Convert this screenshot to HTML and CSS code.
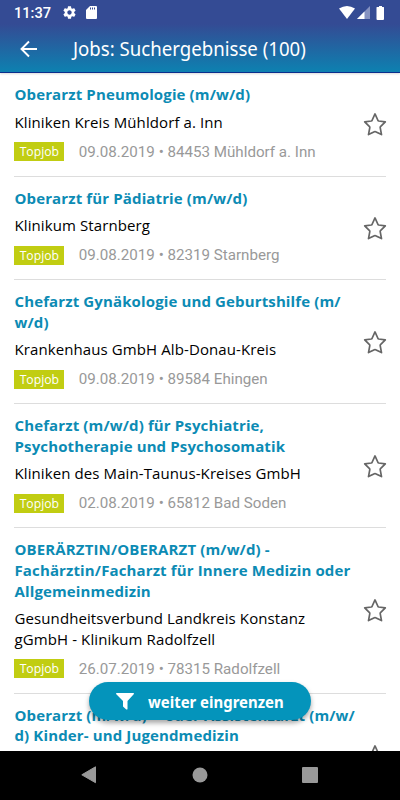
FILE: index.html
```html
<!DOCTYPE html>
<html lang="de">
<head>
    <meta charset="UTF-8">
    <meta name="viewport" content="width=device-width, initial-scale=1.0">
    <title>Jobs: Suchergebnisse</title>
    <link rel="stylesheet" href="styles.css">
</head>
<body>

<!-- Icons -->
<svg class="sprite">
    <symbol id="star" viewBox="0 0 24 24">
        <path d="M12 1.9 L15 8.5 Q15.2 8.9 15.7 9 L22.3 9.9 L17.5 14.7 Q17.1 15.1 17.2 15.6 L18.5 22.6 L12.6 19.7 Q12 19.4 11.4 19.7 L5.5 22.6 L6.8 15.6 Q6.9 15.1 6.5 14.7 L1.7 9.9 L8.3 9 Q8.8 8.9 9 8.5 Z" fill="none" stroke="#666" stroke-width="1.7" stroke-linejoin="round"/>
    </symbol>
</svg>

<div class="screen">
    <!-- Statusleiste und Titel -->
    <header class="header">
        <div class="status">
            <span class="time">11:37</span>
            <svg class="gear" viewBox="0 0 24 24"><path fill="#fff" d="M19.43 12.98c.04-.32.07-.64.07-.98s-.03-.66-.07-.98l2.11-1.65c.19-.15.24-.42.12-.64l-2-3.46c-.12-.22-.39-.3-.61-.22l-2.49 1c-.52-.4-1.08-.73-1.69-.98l-.38-2.65C14.46 2.18 14.25 2 14 2h-4c-.25 0-.46.18-.49.42l-.38 2.65c-.61.25-1.17.59-1.69.98l-2.49-1c-.23-.09-.49 0-.61.22l-2 3.46c-.13.22-.07.49.12.64l2.11 1.65c-.04.32-.07.65-.07.98s.03.66.07.98l-2.11 1.65c-.19.15-.24.42-.12.64l2 3.46c.12.22.39.3.61.22l2.49-1c.52.4 1.08.73 1.69.98l.38 2.65c.03.24.24.42.49.42h4c.25 0 .46-.18.49-.42l.38-2.65c.61-.25 1.17-.59 1.69-.98l2.49 1c.23.09.49 0 .61-.22l2-3.46c.12-.22.07-.49-.12-.64l-2.11-1.65zM12 15.5c-1.93 0-3.5-1.57-3.5-3.5s1.57-3.5 3.5-3.5 3.5 1.57 3.5 3.5-1.57 3.5-3.5 3.5z"/></svg>
            <svg class="sdcard" viewBox="0 0 11 13"><path fill="#fff" d="M4 0h6q1 0 1 1v11q0 1-1 1H1q-1 0-1-1V4z"/><path stroke="#344b94" d="M4.5 1.5v2M6.5 1.5v2M8.5 1.5v2"/></svg>
            <svg class="signals" viewBox="0 0 48 16">
                <path fill="#fff" d="M0 3.6Q8 -1.6 16 3.6L8 14z"/>
                <path fill="#8592c1" d="M31 1v13H18z"/>
                <path fill="#fff" d="M25.5 6.5V14H18z"/>
                <path fill="#fff" d="M40 1h3v1h1.5q.5 0 .5.5v11.5q0 1-1 1h-5.5q-1 0-1-1V2.5q0-.5.5-.5H40z"/>
            </svg>
        </div>
        <div class="toolbar">
            <svg class="back" viewBox="0 0 18 18"><path d="M17 9H2M9 1.5L1.5 9L9 16.5" fill="none" stroke="#fff" stroke-width="1.9"/></svg>
            <h1>Jobs: Suchergebnisse (100)</h1>
        </div>
    </header>

    <!-- Trefferliste -->
    <main class="list">
        <article class="job">
            <div class="info">
                <h2>Oberarzt Pneumologie (m/w/d)</h2>
                <p class="company">Kliniken Kreis Mühldorf a. Inn</p>
                <p class="meta"><span class="badge">Topjob</span><span class="place">09.08.2019 • 84453 Mühldorf a. Inn</span></p>
            </div>
            <svg class="star"><use href="#star"/></svg>
        </article>
        <article class="job">
            <div class="info">
                <h2>Oberarzt für Pädiatrie (m/w/d)</h2>
                <p class="company">Klinikum Starnberg</p>
                <p class="meta"><span class="badge">Topjob</span><span class="place">09.08.2019 • 82319 Starnberg</span></p>
            </div>
            <svg class="star"><use href="#star"/></svg>
        </article>
        <article class="job">
            <div class="info">
                <h2>Chefarzt Gynäkologie und Geburtshilfe (m/<br>w/d)</h2>
                <p class="company">Krankenhaus GmbH Alb-Donau-Kreis</p>
                <p class="meta"><span class="badge">Topjob</span><span class="place">09.08.2019 • 89584 Ehingen</span></p>
            </div>
            <svg class="star"><use href="#star"/></svg>
        </article>
        <article class="job">
            <div class="info">
                <h2>Chefarzt (m/w/d) für Psychiatrie,<br>Psychotherapie und Psychosomatik</h2>
                <p class="company">Kliniken des Main-Taunus-Kreises GmbH</p>
                <p class="meta"><span class="badge">Topjob</span><span class="place">02.08.2019 • 65812 Bad Soden</span></p>
            </div>
            <svg class="star"><use href="#star"/></svg>
        </article>
        <article class="job">
            <div class="info">
                <h2>OBERÄRZTIN/OBERARZT (m/w/d) -<br>Fachärztin/Facharzt für Innere Medizin oder<br>Allgemeinmedizin</h2>
                <p class="company">Gesundheitsverbund Landkreis Konstanz<br>gGmbH - Klinikum Radolfzell</p>
                <p class="meta"><span class="badge">Topjob</span><span class="place">26.07.2019 • 78315 Radolfzell</span></p>
            </div>
            <svg class="star"><use href="#star"/></svg>
        </article>
        <article class="job last">
            <div class="info">
                <h2>Oberarzt (m/w/d) <span class="second">oder Assistenzarzt</span> (m/w/<br>d) Kinder- und Jugendmedizin</h2>
            </div>
            <svg class="star"><use href="#star"/></svg>
        </article>
    </main>

    <!-- Filter -->
    <button class="filter">
        <svg class="funnel" viewBox="0 0 18 17"><path fill="#fff" d="M.5 0h17q.8.5.2 1.3L11.5 8v8q-.3.9-1.2.4L7 13.5V8L.3 1.3Q-.2.5.5 0z"/></svg>
        <span>weiter eingrenzen</span>
    </button>

    <!-- Navigationsleiste -->
    <nav class="navbar">
        <svg viewBox="0 0 16 18"><path fill="#999" d="M14.5.8v15.9L.8 8.8z" stroke="#999" stroke-linejoin="round"/></svg>
        <svg viewBox="0 0 16 18"><circle cx="8" cy="9" r="7.5" fill="#999"/></svg>
        <svg viewBox="0 0 16 18"><rect y="1" width="16" height="16" rx="1" fill="#999"/></svg>
    </nav>
</div>

</body>
</html>
```

FILE: styles.css
```css
* {
    box-sizing: border-box;
}

body {
    margin: 0;
    background: #fff;
    font-family: "Open Sans", "Noto Sans", sans-serif;
}

h1, h2, p {
    margin: 0;
}

svg {
    display: block;
    flex: none;
}

.sprite {
    display: none;
}

.screen {
    position: relative;
    display: flex;
    flex-direction: column;
    width: 400px;
    height: 800px;
    overflow: hidden;
}

/* Kopfbereich */
.header {
    flex: none;
    height: 73px;
    background: linear-gradient(#344b94 24px, #0e80b0 71px);
    border-bottom: 1px solid #0b2e8c;
    box-shadow: 0 1px 2px rgba(0, 0, 0, 0.15);
    color: #fff;
}

.status {
    display: flex;
    align-items: center;
    height: 25px;
    padding: 0 14px;
}

.time {
    width: 48px;
    font: 500 14.6px Roboto, sans-serif;
}

.gear {
    width: 15px;
    height: 15px;
}

.sdcard {
    width: 11px;
    height: 13px;
    margin-left: 9px;
}

.signals {
    width: 48px;
    height: 16px;
    margin-left: auto;
    margin-right: -1px;
}

.toolbar {
    display: flex;
    align-items: center;
    height: 47px;
    padding-left: 20px;
}

.back {
    width: 18px;
    height: 18px;
}

h1 {
    margin-left: 35px;
    font-family: "Noto Sans", sans-serif;
    font-size: 19.5px;
    font-weight: 400;
    white-space: nowrap;
    transform: scaleX(0.955);
    transform-origin: left;
}

/* Liste */
.list {
    flex: 1;
    min-height: 0;
    padding: 0.5px 14px 0;
    overflow: hidden;
}

.job {
    display: flex;
    align-items: center;
    padding: 10.7px 0 14.1px;
    border-bottom: 1px solid #ddd;
}

.info {
    flex: 1;
    padding-left: 0.5px;
    white-space: nowrap;
}

h2 {
    color: #0c8bb4;
    font-size: 15px;
    font-weight: 700;
    line-height: 20.7px;
    letter-spacing: 0.13px;
}

.company {
    margin-top: 7px;
    color: #000;
    font-size: 15px;
    line-height: 20.7px;
    letter-spacing: 0.1px;
}

.meta {
    display: flex;
    align-items: center;
    height: 20px;
    margin-top: 9.2px;
}

.badge {
    width: 50px;
    height: 19px;
    margin-left: -0.2px;
    background: #c1cd12;
    color: #fff;
    font-size: 12.2px;
    line-height: 19px;
    text-align: center;
}

.place {
    margin-left: 14.5px;
    color: #999;
    font-family: Roboto, sans-serif;
    font-size: 15.15px;
}

.star {
    width: 24px;
    height: 24px;
    margin-top: 3px;
    margin-right: -1px;
}

.last {
    height: 130px;
    align-items: flex-start;
}

.last .second {
    padding-left: 14px;
}

.last .star {
    margin-top: 39px;
}

/* Filter-Button */
.filter {
    position: absolute;
    left: 89px;
    top: 682px;
    display: flex;
    align-items: center;
    width: 222px;
    height: 38px;
    padding: 0 0 0 27px;
    border: 0;
    border-radius: 19px;
    background: #0494bb;
    box-shadow: 0 3px 5px rgba(0, 0, 0, 0.35);
    color: #fff;
    font: 700 16.5px "Noto Sans", sans-serif;
    white-space: nowrap;
}

.filter span {
    transform: scaleX(0.905);
    transform-origin: left;
}

.funnel {
    width: 18px;
    height: 17px;
    margin-right: 14px;
}

/* Navigation unten */
.navbar {
    display: flex;
    flex: none;
    justify-content: space-between;
    height: 49px;
    padding: 15px 82px 0 81px;
    background: #000;
}

.navbar svg {
    width: 16px;
    height: 18px;
}
```
